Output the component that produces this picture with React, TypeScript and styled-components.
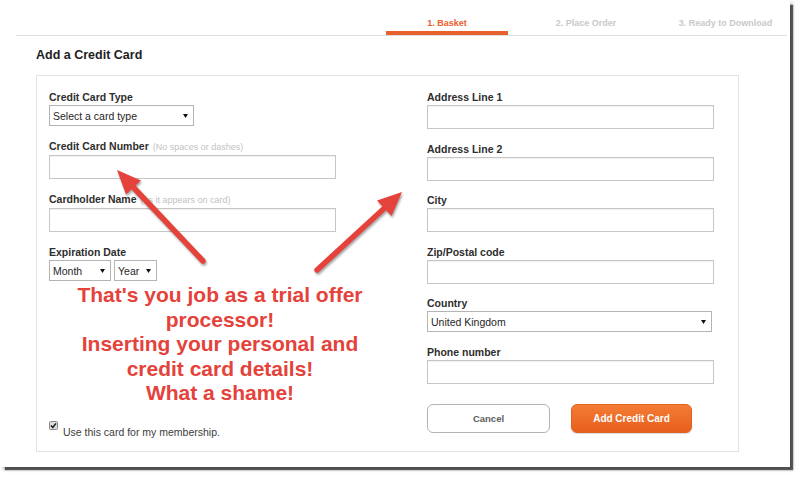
import React from "react";
import styled, { createGlobalStyle } from "styled-components";

const GlobalStyle = createGlobalStyle`
  html, body { margin: 0; padding: 0; background: #fff; }
  body { font-family: "Liberation Sans", Arial, sans-serif; min-height: 477px; }
  * { box-sizing: border-box; }
`;

const Page = styled.div`
  width: 800px;
  height: 477px;
  padding: 0;
`;

const Frame = styled.div`
  position: relative;
  width: 790px;
  height: 467px;
  background: #fff;
  box-shadow: 4px 4px 1px -1px rgba(0, 0, 0, 0.6), 3px 3px 3px rgba(0, 0, 0, 0.25);
`;

const Steps = styled.div`
  margin: 0 3px 0 16px;
  height: 36px;
  border-bottom: 1px solid #dedede;
  display: flex;
  justify-content: flex-end;
`;

const Step = styled.div<{ $w: number; $active?: boolean }>`
  width: ${(p) => p.$w}px;
  height: 35px;
  padding-top: 17.5px;
  text-align: center;
  font-size: 9px;
  line-height: 11px;
  font-weight: bold;
  color: ${(p) => (p.$active ? "#e8602c" : "#c9c9c9")};
  border-bottom: 4px solid ${(p) => (p.$active ? "#e8602c" : "transparent")};
`;

const Content = styled.div`
  padding: 0 51px 0 36px;
`;

const Title = styled.h2`
  margin: 12px 0 12px;
  font-size: 12.5px;
  line-height: 15px;
  font-weight: bold;
  color: #1e1e1e;
`;

const FormBox = styled.div`
  height: 377px;
  border: 1px solid #e2e2e2;
  padding: 15px 12px 12px 12px;
  display: grid;
  grid-template-columns: 378px 1fr;
`;

const Column = styled.div<{ $gap: number }>`
  display: flex;
  flex-direction: column;
  gap: ${(p) => p.$gap}px;
`;

const Group = styled.div``;

const Label = styled.div`
  font-size: 10.5px;
  line-height: 13px;
  font-weight: bold;
  color: #2e2e2e;
  margin-bottom: 1px;
  white-space: nowrap;
`;

const Note = styled.span`
  font-weight: normal;
  font-size: 9px;
  color: #c2c2c2;
  margin-left: 4px;
`;

const TextInput = styled.input`
  display: block;
  width: 287px;
  height: 24px;
  border: 1px solid #c6c6c6;
  box-shadow: inset 0 1px 1px rgba(0, 0, 0, 0.06);
  background: #fff;
  margin: 0;
  padding: 0 4px;
  font-family: inherit;
  font-size: 10.5px;
`;

const SelectFace = styled.div<{ $w: number }>`
  width: ${(p) => p.$w}px;
  height: 21px;
  border: 1px solid #b4b4b4;
  background: #fff;
  display: flex;
  align-items: center;
  justify-content: space-between;
  padding: 0 5px 0 3px;
  font-size: 10.5px;
  color: #262626;
`;

const SelectRow = styled.div`
  display: flex;
  gap: 3px;
`;

const Spacer = styled.div`
  flex: 1;
`;

const CheckRow = styled.div`
  display: flex;
  align-items: flex-start;
  gap: 5px;
`;

const CheckText = styled.span`
  margin-top: 5px;
  font-size: 10.5px;
  line-height: 13px;
  color: #3c3c3c;
`;

const Buttons = styled.div`
  display: flex;
  gap: 21px;
  margin-top: 6px;
`;

const Button = styled.button<{ $primary?: boolean; $w: number }>`
  width: ${(p) => p.$w}px;
  height: 29px;
  border-radius: 6px;
  font-family: inherit;
  font-weight: bold;
  font-size: ${(p) => (p.$primary ? "10px" : "9.5px")};
  cursor: pointer;
  border: 1px solid ${(p) => (p.$primary ? "#e0621f" : "#b3b3b3")};
  color: ${(p) => (p.$primary ? "#fff" : "#5e5e5e")};
  background: ${(p) =>
    p.$primary ? "linear-gradient(#f47c34, #e65f1c)" : "#fff"};
  box-shadow: ${(p) => (p.$primary ? "0 1px 1px rgba(0,0,0,0.15)" : "none")};
`;

const Annotation = styled.div`
  position: absolute;
  left: 40px;
  top: 283px;
  width: 360px;
  text-align: center;
  font-size: 21px;
  line-height: 24.5px;
  font-weight: bold;
  color: #e4423a;
`;

const ArrowLayer = styled.svg`
  position: absolute;
  left: 0;
  top: 0;
  pointer-events: none;
  filter: drop-shadow(1px 2px 1px rgba(0, 0, 0, 0.35));
`;

const Caret = () => (
  <svg width="5" height="4" viewBox="0 0 5 4">
    <path d="M0 0 L5 0 L2.5 4 Z" fill="#111" />
  </svg>
);

const Select = ({ w, text }: { w: number; text: string }) => (
  <SelectFace $w={w}>
    <span>{text}</span>
    <Caret />
  </SelectFace>
);

const Checkbox = () => (
  <svg width="9" height="9" viewBox="0 0 9 9">
    <rect x="0.5" y="0.5" width="8" height="8" rx="1" fill="#dcdcdc" stroke="#8a8a8a" />
    <path d="M2 4.6 L3.8 6.4 L7 2.4" fill="none" stroke="#111" strokeWidth="1.4" />
  </svg>
);

const Field = ({ label, note }: { label: string; note?: string }) => (
  <Group>
    <Label>
      {label}
      {note && <Note>{note}</Note>}
    </Label>
    <TextInput type="text" />
  </Group>
);

export default function App() {
  return (
    <Page>
      <GlobalStyle />
      <Frame>
        <Steps>
          <Step $w={122} $active>
            1. Basket
          </Step>
          <Step $w={156}>2. Place Order</Step>
          <Step $w={123}>3. Ready to Download</Step>
        </Steps>
        <Content>
          <Title>Add a Credit Card</Title>
          <FormBox>
            <Column $gap={14}>
              <Group>
                <Label>Credit Card Type</Label>
                <Select w={145} text="Select a card type" />
              </Group>
              <Field label="Credit Card Number" note="(No spaces or dashes)" />
              <Field label="Cardholder Name" note="(as it appears on card)" />
              <Group>
                <Label>Expiration Date</Label>
                <SelectRow>
                  <Select w={62} text="Month" />
                  <Select w={43} text="Year" />
                </SelectRow>
              </Group>
              <Spacer />
              <CheckRow>
                <Checkbox />
                <CheckText>Use this card for my membership.</CheckText>
              </CheckRow>
            </Column>
            <Column $gap={13.6}>
              <Field label="Address Line 1" />
              <Field label="Address Line 2" />
              <Field label="City" />
              <Field label="Zip/Postal code" />
              <Group>
                <Label>Country</Label>
                <Select w={285} text="United Kingdom" />
              </Group>
              <Field label="Phone number" />
              <Buttons>
                <Button $w={123}>Cancel</Button>
                <Button $w={121} $primary>
                  Add Credit Card
                </Button>
              </Buttons>
            </Column>
          </FormBox>
        </Content>

        <ArrowLayer width="790" height="467" viewBox="0 0 790 467">
          <line x1="203" y1="261" x2="134" y2="188" stroke="#e4423a" strokeWidth="5.5" strokeLinecap="round" />
          <polygon points="117,170 141,180.5 126,194.5" fill="#e4423a" />
          <line x1="317" y1="270" x2="384" y2="208.5" stroke="#e4423a" strokeWidth="5.5" strokeLinecap="round" />
          <polygon points="402,192 391.5,216 377,200.5" fill="#e4423a" />
        </ArrowLayer>

        <Annotation>
          That's you job as a trial offer
          <br />
          processor!
          <br />
          Inserting your personal and
          <br />
          credit card details!
          <br />
          What a shame!
        </Annotation>
      </Frame>
    </Page>
  );
}
